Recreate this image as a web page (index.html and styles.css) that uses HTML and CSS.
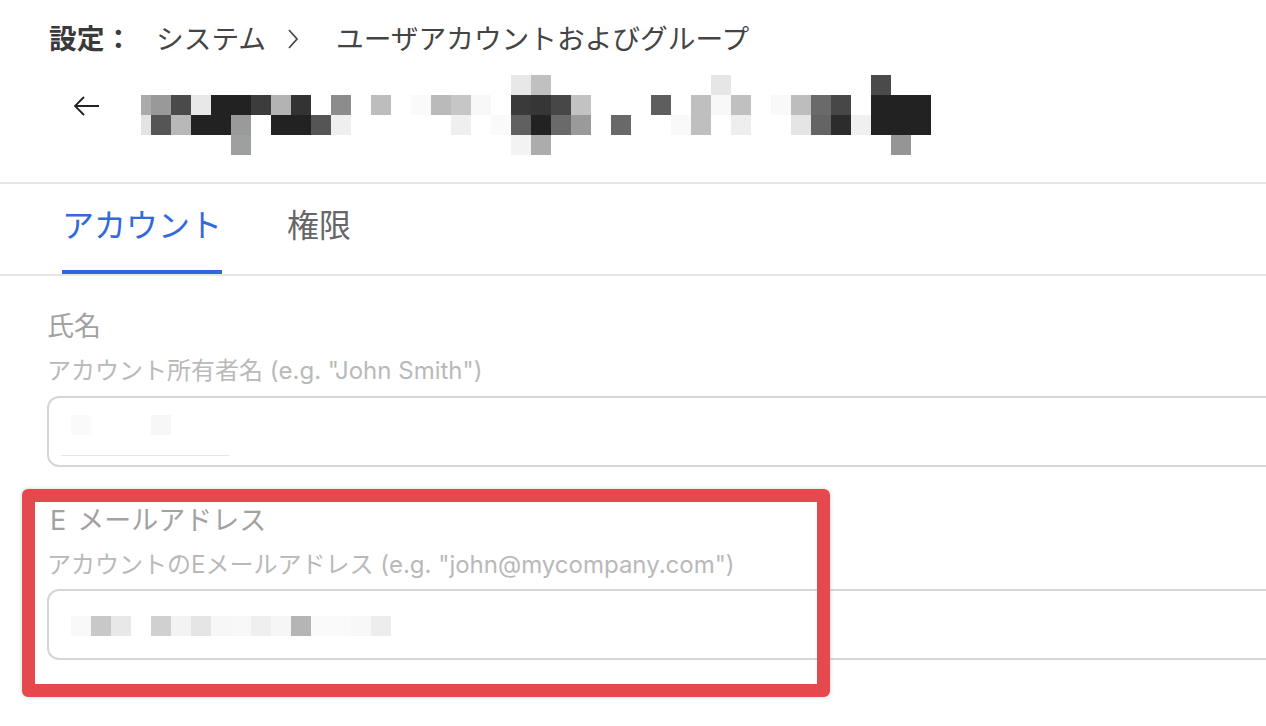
FILE: index.html
```html
<!DOCTYPE html>
<html lang="ja">
<head>
<meta charset="utf-8">
<link rel="stylesheet" href="styles.css">
</head>
<body>
<div class="page">
  <header class="header">
    <nav class="crumbs">
      <span class="crumb-root">設定：</span>
      <span class="crumb">システム</span>
      <svg class="chev" width="12" height="20" viewBox="0 0 12 20"><path d="M2 1 L10 10 L2 19" fill="none" stroke="#444" stroke-width="1.7"/></svg>
      <span class="crumb">ユーザアカウントおよびグループ</span>
    </nav>
    <div class="title-row">
      <svg class="back" width="26" height="20" viewBox="0 0 26 20"><path d="M26 10 H2 M11 1 L2 10 L11 19" fill="none" stroke="#222" stroke-width="1.8"/></svg>
      <svg class="mosaic" width="790" height="80" viewBox="141 75 790 80">
        <rect x="511" y="75" width="20" height="20" fill="#e8e8e8"/>
        <rect x="531" y="75" width="20" height="20" fill="#c0c0c0"/>
        <rect x="711" y="75" width="20" height="20" fill="#e6e6e6"/>
        <rect x="871" y="75" width="20" height="20" fill="#4a4a4a"/>

        <rect x="141" y="95" width="10" height="20" fill="#aaaaaa"/>
        <rect x="151" y="95" width="20" height="20" fill="#999999"/>
        <rect x="171" y="95" width="20" height="20" fill="#4a4a4a"/>
        <rect x="191" y="95" width="20" height="20" fill="#e8e8e8"/>
        <rect x="211" y="95" width="20" height="20" fill="#222222"/>
        <rect x="231" y="95" width="20" height="20" fill="#222222"/>
        <rect x="251" y="95" width="20" height="20" fill="#3c3c3c"/>
        <rect x="271" y="95" width="20" height="20" fill="#b3b3b3"/>
        <rect x="291" y="95" width="20" height="20" fill="#333333"/>
        <rect x="331" y="95" width="20" height="20" fill="#8c8c8c"/>
        <rect x="371" y="95" width="20" height="20" fill="#bdbdbd"/>
        <rect x="411" y="95" width="20" height="20" fill="#fafafa"/>
        <rect x="431" y="95" width="20" height="20" fill="#bababa"/>
        <rect x="451" y="95" width="20" height="20" fill="#c6c6c6"/>
        <rect x="471" y="95" width="20" height="20" fill="#f8f8f8"/>
        <rect x="511" y="95" width="20" height="20" fill="#3a3a3a"/>
        <rect x="531" y="95" width="20" height="20" fill="#363636"/>
        <rect x="551" y="95" width="20" height="20" fill="#474747"/>
        <rect x="571" y="95" width="20" height="20" fill="#c2c2c2"/>
        <rect x="651" y="95" width="20" height="20" fill="#5e5e5e"/>
        <rect x="691" y="95" width="20" height="20" fill="#bfbfbf"/>
        <rect x="711" y="95" width="20" height="20" fill="#f8f8f8"/>
        <rect x="731" y="95" width="20" height="20" fill="#c0c0c0"/>
        <rect x="771" y="95" width="20" height="20" fill="#f9f9f9"/>
        <rect x="791" y="95" width="20" height="20" fill="#bdbdbd"/>
        <rect x="811" y="95" width="20" height="20" fill="#6a6a6a"/>
        <rect x="831" y="95" width="20" height="20" fill="#474747"/>
        <rect x="871" y="95" width="60" height="20" fill="#222222"/>

        <rect x="141" y="115" width="10" height="20" fill="#e3e3e3"/>
        <rect x="151" y="115" width="20" height="20" fill="#555555"/>
        <rect x="171" y="115" width="20" height="20" fill="#b8b8b8"/>
        <rect x="191" y="115" width="40" height="20" fill="#222222"/>
        <rect x="231" y="115" width="20" height="20" fill="#9a9a9a"/>
        <rect x="271" y="115" width="40" height="20" fill="#222222"/>
        <rect x="311" y="115" width="20" height="20" fill="#555555"/>
        <rect x="331" y="115" width="20" height="20" fill="#efefef"/>
        <rect x="451" y="115" width="20" height="20" fill="#efefef"/>
        <rect x="491" y="115" width="20" height="20" fill="#fafafa"/>
        <rect x="511" y="115" width="20" height="20" fill="#606060"/>
        <rect x="531" y="115" width="20" height="20" fill="#222222"/>
        <rect x="551" y="115" width="20" height="20" fill="#6a6a6a"/>
        <rect x="571" y="115" width="20" height="20" fill="#9a9a9a"/>
        <rect x="611" y="115" width="20" height="20" fill="#696969"/>
        <rect x="671" y="115" width="20" height="20" fill="#f9f9f9"/>
        <rect x="691" y="115" width="20" height="20" fill="#bfbfbf"/>
        <rect x="731" y="115" width="20" height="20" fill="#eeeeee"/>
        <rect x="791" y="115" width="20" height="20" fill="#e5e5e5"/>
        <rect x="811" y="115" width="20" height="20" fill="#646464"/>
        <rect x="831" y="115" width="20" height="20" fill="#2c2c2c"/>
        <rect x="851" y="115" width="20" height="20" fill="#f0f0f0"/>
        <rect x="871" y="115" width="60" height="20" fill="#222222"/>

        <rect x="231" y="135" width="20" height="20" fill="#9ea0a0"/>
        <rect x="511" y="135" width="20" height="20" fill="#f3f3f3"/>
        <rect x="531" y="135" width="20" height="20" fill="#acacac"/>
        <rect x="891" y="135" width="20" height="20" fill="#959595"/>
      </svg>
    </div>
  </header>

  <div class="tabs">
    <div class="tab active">アカウント</div>
    <div class="tab">権限</div>
  </div>

  <main class="form">
    <section class="field">
      <div class="label">氏名</div>
      <div class="help">アカウント所有者名 (e.g. "John Smith")</div>
      <div class="input">
        <svg class="value" width="400" height="66">
          <rect x="22" y="17" width="20" height="20" fill="#fafafa"/>
          <rect x="102" y="17" width="20" height="20" fill="#f7f7f7"/>
          <rect x="12" y="57" width="168" height="1" fill="#e6e6e6"/>
        </svg>
      </div>
    </section>

    <section class="field field-email">
      <div class="label label-email"><span class="label-e">E</span>メールアドレス</div>
      <div class="help">アカウントのEメールアドレス (e.g. "john@mycompany.com")</div>
      <div class="input">
        <svg class="value" width="400" height="67">
          <rect x="22" y="25" width="20" height="20" fill="#f9f9f9"/>
          <rect x="42" y="25" width="20" height="20" fill="#c8c8c8"/>
          <rect x="62" y="25" width="20" height="20" fill="#e8e8e8"/>
          <rect x="102" y="25" width="20" height="20" fill="#d0d0d0"/>
          <rect x="122" y="25" width="20" height="20" fill="#f3f3f3"/>
          <rect x="142" y="25" width="20" height="20" fill="#e5e5e5"/>
          <rect x="162" y="25" width="20" height="20" fill="#f7f7f7"/>
          <rect x="182" y="25" width="20" height="20" fill="#f8f8f8"/>
          <rect x="202" y="25" width="20" height="20" fill="#efefef"/>
          <rect x="222" y="25" width="20" height="20" fill="#f6f6f6"/>
          <rect x="242" y="25" width="20" height="20" fill="#b5b5b5"/>
          <rect x="262" y="25" width="20" height="20" fill="#fafafa"/>
          <rect x="282" y="25" width="20" height="20" fill="#fafafa"/>
          <rect x="302" y="25" width="20" height="20" fill="#f8f8f8"/>
          <rect x="322" y="25" width="20" height="20" fill="#ededed"/>
        </svg>
      </div>
      <div class="highlight"></div>
    </section>
  </main>
</div>
</body>
</html>
```

FILE: styles.css
```css
html, body {
  margin: 0;
  padding: 0;
  background: #ffffff;
  overflow: hidden;
}

body {
  font-family: "Inter", "Noto Sans CJK JP", sans-serif;
  width: 1266px;
  height: 726px;
}

.page {
  width: 1266px;
}

.header {
  padding: 20px 0 27px 49px;
  border-bottom: 2px solid #e6e6e6;
}

.crumbs {
  display: flex;
  align-items: center;
  height: 38px;
  font-size: 27.7px;
  line-height: 38px;
  color: #444444;
}

.crumb-root {
  font-weight: 700;
  color: #3a3a3a;
  margin-right: 24px;
}

.chev {
  margin: 0 37px 0 21px;
  flex: none;
}

.title-row {
  display: flex;
  align-items: flex-start;
  margin-top: 17px;
  margin-left: 24px;
  height: 80px;
}

.back {
  margin-top: 21px;
  margin-right: 42px;
  flex: none;
}

.mosaic {
  display: block;
  flex: none;
}

.tabs {
  display: flex;
  gap: 65px;
  padding-left: 62px;
  border-bottom: 2px solid #e6e6e6;
}

.tab {
  font-size: 32px;
  line-height: 44px;
  padding: 20px 0 22px;
  border-bottom: 4px solid transparent;
  color: #666666;
}

.tab.active {
  color: #3469dc;
  border-bottom-color: #2f66dd;
}

.form {
  padding: 34px 0 0 47px;
}

.field {
  display: flex;
  flex-direction: column;
}

.field-email {
  position: relative;
  margin-top: 37px;
}

.label {
  font-size: 27px;
  line-height: 34px;
  color: #a2a2a2;
}

.label-email {
  padding-left: 3px;
}

.label-e {
  margin-right: 11px;
}

.help {
  margin-top: 12px;
  font-size: 24px;
  line-height: 30px;
  color: #b9b9b9;
}

.input {
  margin-top: 10px;
  width: 1260px;
  height: 67px;
  border: 2px solid #d6d6d6;
  border-radius: 12px;
  background: #ffffff;
}

.field-email .input {
  margin-top: 9px;
  height: 67px;
}

.value {
  display: block;
}

.highlight {
  position: absolute;
  left: -25px;
  top: -15px;
  width: 782px;
  height: 182px;
  border: 13px solid #e5484d;
  border-radius: 6px;
  box-shadow: 0 0 4px rgba(0, 0, 0, 0.18);
  pointer-events: none;
}
```
